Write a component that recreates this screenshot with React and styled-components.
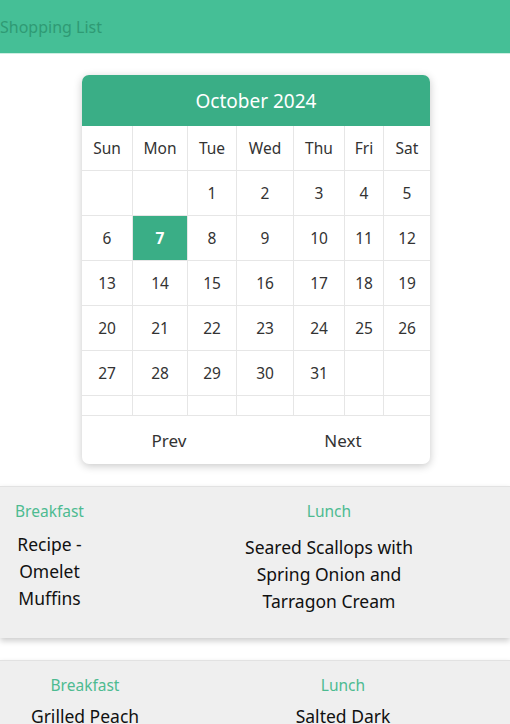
import styled, { createGlobalStyle } from 'styled-components';

const GlobalStyle = createGlobalStyle`
	* {
		box-sizing: border-box;
	}
	body {
		margin: 0;
		background: #fff;
		font-family: 'Noto Sans', 'Open Sans', sans-serif;
		color: #222;
		overflow: hidden;
	}
`;

const Header = styled.header`
	height: 54px;
	display: flex;
	align-items: center;
	background: #45bf96;
	border-bottom: 1px solid #cdeee2;
`;

const Brand = styled.h1`
	margin: 0;
	font-size: 16px;
	font-weight: 400;
	color: #2f9a74;
`;

const CalendarWrap = styled.section`
	display: flex;
	justify-content: center;
	padding: 21px 0 22px;
`;

const Calendar = styled.div`
	width: 348px;
	margin-left: 2px;
	background: #fff;
	border-radius: 7px;
	box-shadow: 0 2px 9px rgba(0, 0, 0, 0.22);
	overflow: hidden;
`;

const MonthTitle = styled.div`
	height: 51px;
	display: flex;
	align-items: center;
	justify-content: center;
	background: #3aae86;
	color: #fff;
	font-size: 19px;
`;

const Grid = styled.div`
	display: grid;
	grid-template-columns: 51px 55px 49px 57px 51px 39px 46px;
	grid-template-rows: repeat(6, 45px) 20px;
`;

const Cell = styled.div`
	display: flex;
	align-items: center;
	justify-content: center;
	border-right: 1px solid #e6e6e6;
	border-bottom: 1px solid #e6e6e6;
	font-size: 15.5px;
	color: #333;
	background: ${(props) => (props.today ? '#3aae86' : 'transparent')};
	font-weight: ${(props) => (props.today ? 700 : 400)};
	${(props) => props.today && 'color: #fff;'}
	&:nth-child(7n) {
		border-right: none;
	}
`;

const Footer = styled.div`
	display: grid;
	grid-template-columns: 1fr 1fr;
	height: 48px;
`;

const NavButton = styled.button`
	border: none;
	background: none;
	font-family: inherit;
	font-size: 17px;
	color: #333;
	padding: 0;
`;

const MealCard = styled.div`
	display: grid;
	grid-template-columns: ${(props) => props.cols};
	column-gap: ${(props) => props.gap}px;
	padding: 14px 0 23px ${(props) => props.left}px;
	margin-bottom: 22px;
	background: #efefef;
	box-shadow: 0 3px 6px rgba(0, 0, 0, 0.2);
	border-top: 1px solid #e2e2e2;
`;

const MealColumn = styled.div`
	display: flex;
	flex-direction: column;
	align-items: center;
	text-align: center;
`;

const MealLabel = styled.div`
	font-size: 15.5px;
	color: #4dbb91;
	line-height: 20px;
	white-space: nowrap;
`;

const MealName = styled.div`
	margin-top: ${(props) => props.offset}px;
	font-size: 17.5px;
	line-height: 27px;
	color: #111;
`;

const days = ['Sun', 'Mon', 'Tue', 'Wed', 'Thu', 'Fri', 'Sat'];

const cells = [
	...Array(2).fill(''),
	...Array.from({ length: 31 }, (_, i) => i + 1),
	...Array(2).fill(''),
];

const meals = [
	{
		left: 12,
		cols: '75px 200px',
		gap: 142,
		items: [
			{ label: 'Breakfast', name: 'Recipe - Omelet Muffins', offset: 10 },
			{ label: 'Lunch', name: 'Seared Scallops with Spring Onion and Tarragon Cream', offset: 13 },
		],
	},
	{
		left: 26,
		cols: '118px 130px',
		gap: 134,
		items: [
			{ label: 'Breakfast', name: 'Grilled Peach Salad', offset: 8 },
			{ label: 'Lunch', name: 'Salted Dark Chocolate Tart', offset: 8 },
		],
	},
];

function App() {
	return (
		<>
			<GlobalStyle />
			<Header>
				<Brand>Shopping List</Brand>
			</Header>
			<CalendarWrap>
				<Calendar>
					<MonthTitle>October 2024</MonthTitle>
					<Grid>
						{days.map((d) => (
							<Cell key={d}>{d}</Cell>
						))}
						{cells.map((c, i) => (
							<Cell key={i} today={c === 7}>
								{c}
							</Cell>
						))}
						{days.map((d) => (
							<Cell key={'e' + d} />
						))}
					</Grid>
					<Footer>
						<NavButton>Prev</NavButton>
						<NavButton>Next</NavButton>
					</Footer>
				</Calendar>
			</CalendarWrap>
			{meals.map((m, i) => (
				<MealCard key={i} cols={m.cols} gap={m.gap} left={m.left}>
					{m.items.map((it) => (
						<MealColumn key={it.label}>
							<MealLabel>{it.label}</MealLabel>
							<MealName offset={it.offset}>{it.name}</MealName>
						</MealColumn>
					))}
				</MealCard>
			))}
		</>
	);
}

export default App;
